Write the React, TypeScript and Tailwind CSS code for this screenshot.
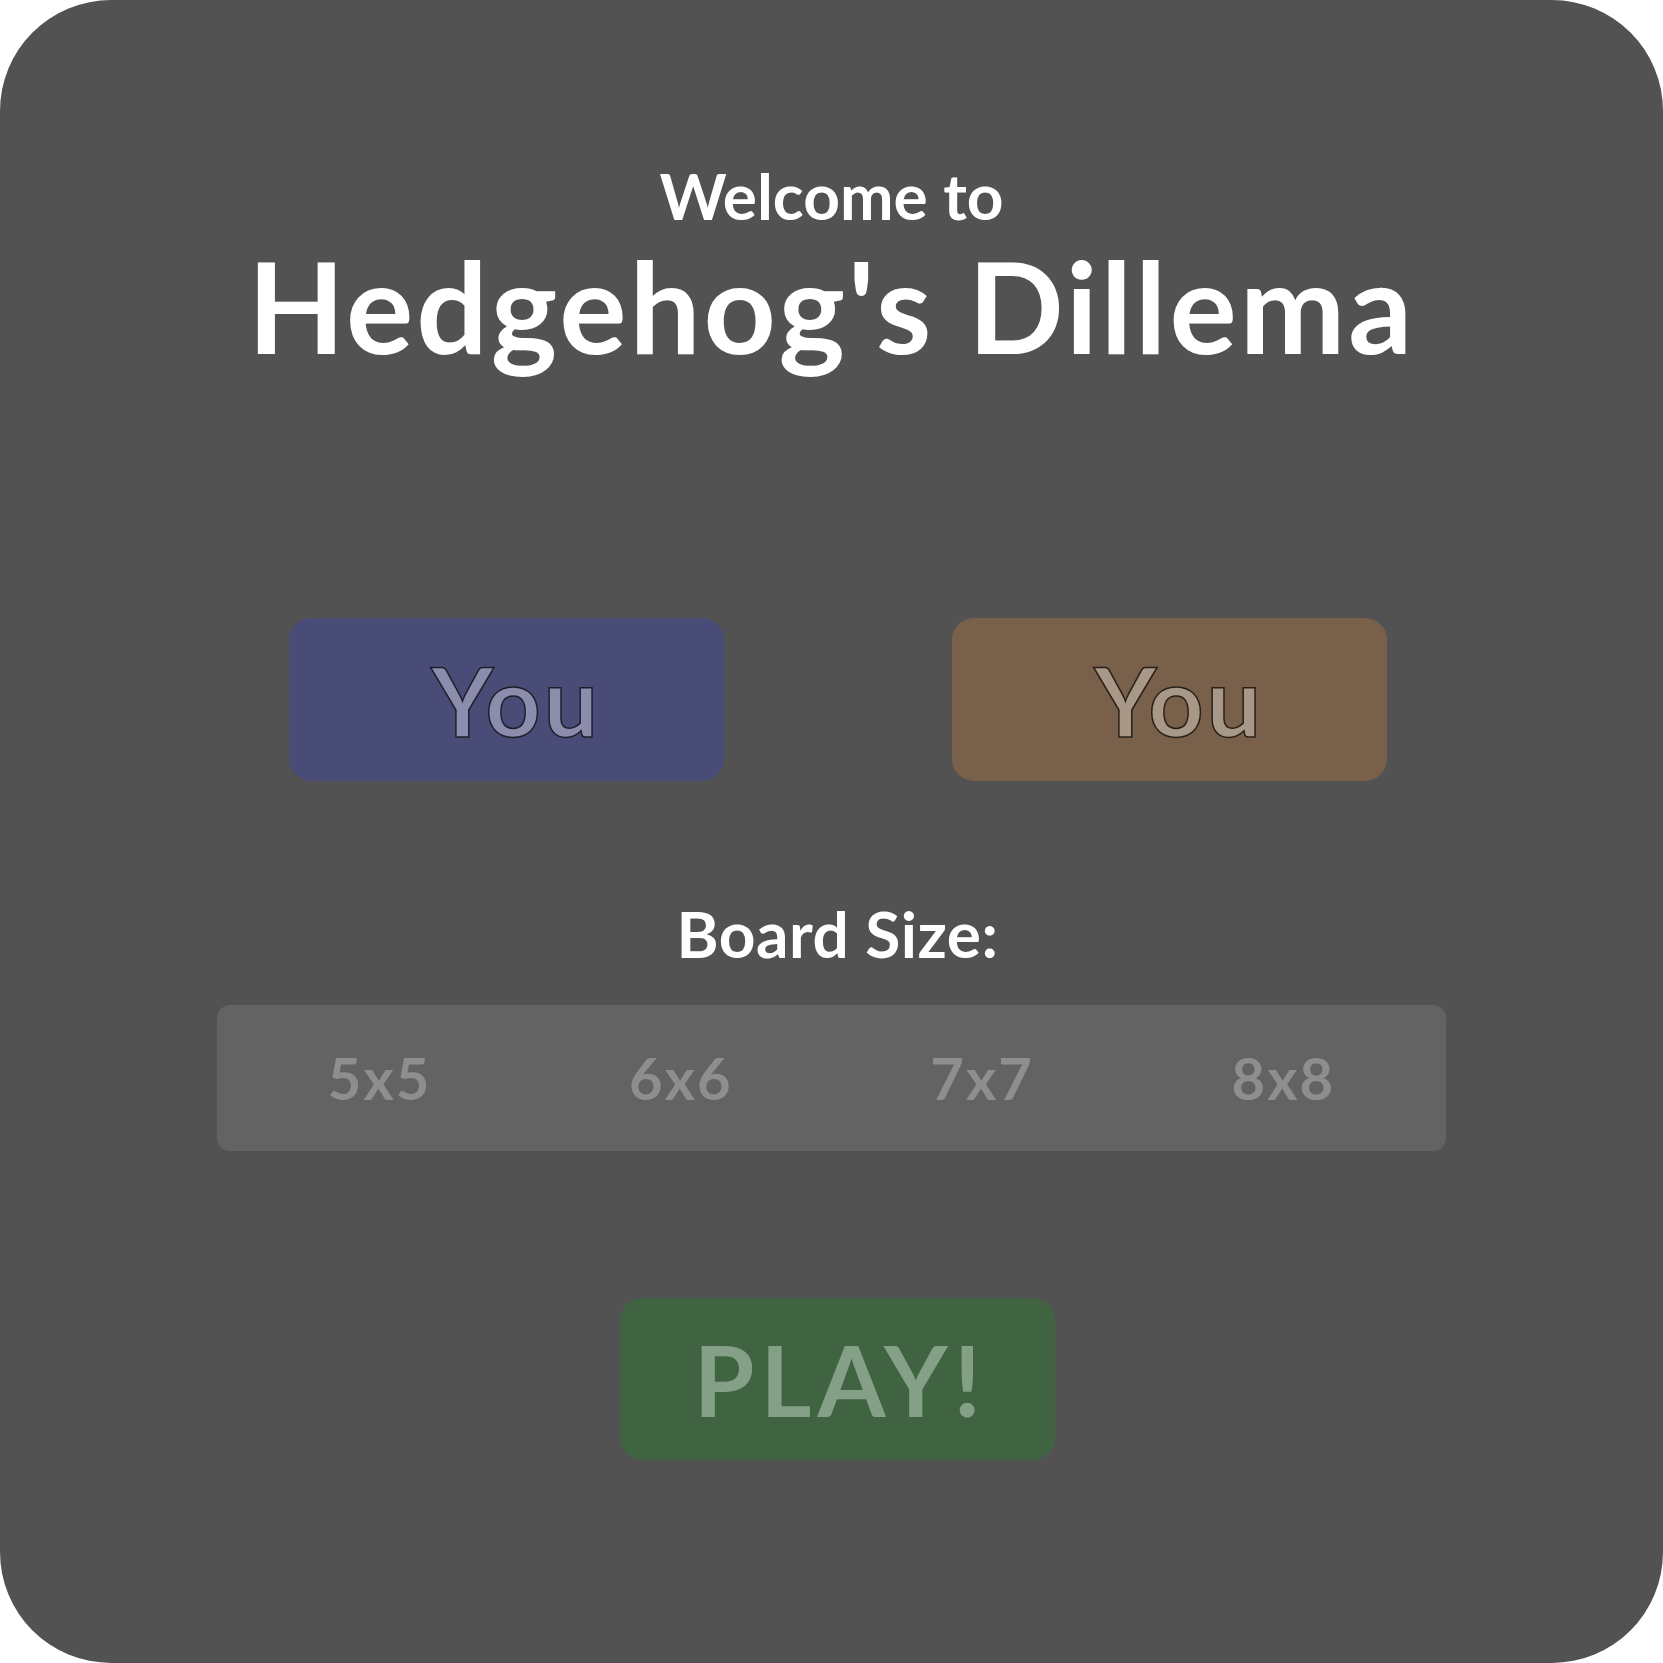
const sizes = ["5x5", "6x6", "7x7", "8x8"];

const font = { fontFamily: "Lato, 'Noto Sans', sans-serif" };

export default function App() {
  return (
    <div className="w-[1663px] h-[1663px] bg-white" style={font}>
      <div className="w-full h-full rounded-[111px] bg-[#525252] flex flex-col items-center">
        {/* Heading */}
        <h2 className="mt-[164px] text-[64px] leading-none font-bold text-white">
          Welcome to
        </h2>
        <h1 className="mt-[15px] text-[126px] leading-none font-bold text-white tracking-[3px]">
          Hedgehog's Dillema
        </h1>

        {/* Player pickers */}
        <div className="mt-[249px] flex gap-[228px] pl-[12px]">
          <button className="w-[435px] h-[163px] rounded-[22px] bg-[#4a4c78] flex items-center justify-center pl-[20px]">
            <span className="text-[96px] leading-none font-bold text-[#8c8cac] tracking-[3px] [-webkit-text-stroke:1.5px_#1e1e2a]">
              You
            </span>
          </button>
          <button className="w-[435px] h-[163px] rounded-[22px] bg-[#78604a] flex items-center justify-center pl-[20px]">
            <span className="text-[96px] leading-none font-bold text-[#a89888] tracking-[3px] [-webkit-text-stroke:1.5px_#2a2018]">
              You
            </span>
          </button>
        </div>

        {/* Board size */}
        <h3 className="mt-[121px] pl-[12px] text-[64px] leading-none font-bold text-white tracking-[0.5px]">
          Board Size:
        </h3>
        <div className="mt-[39px] w-[1229px] h-[146px] rounded-[13px] bg-[#636363] flex px-[12px]">
          {sizes.map((s) => (
            <button
              key={s}
              className="flex-1 flex items-center justify-center text-[58px] leading-none font-bold text-[#8e8e8e] tracking-[2px]"
            >
              {s}
            </button>
          ))}
        </div>

        {/* Play */}
        <button className="mt-[147px] ml-[12px] w-[435px] h-[162px] rounded-[22px] bg-[#406442] flex items-center justify-center">
          <span className="text-[98px] leading-none font-bold text-[#84a086] tracking-[6px] pl-[6px]">
            PLAY!
          </span>
        </button>
      </div>
    </div>
  );
}
